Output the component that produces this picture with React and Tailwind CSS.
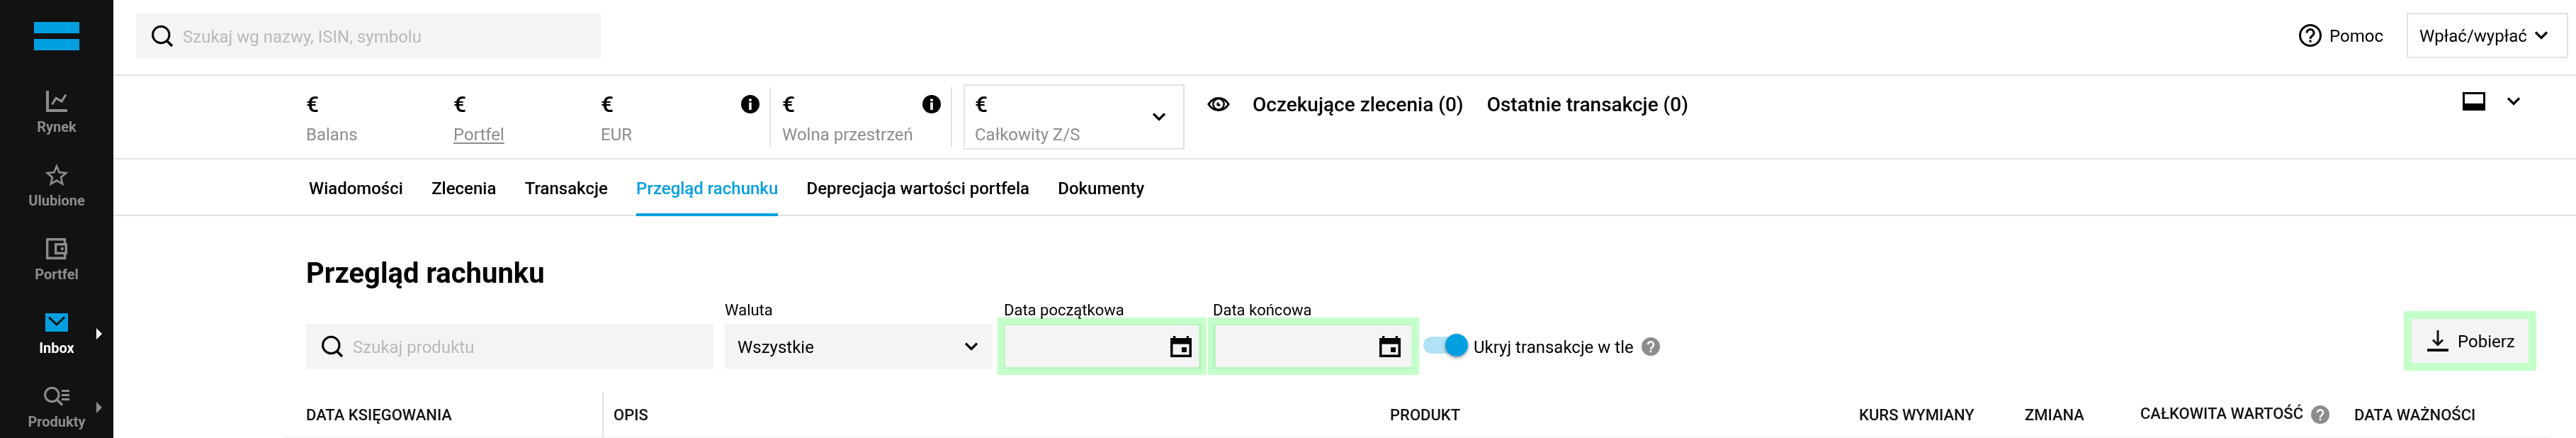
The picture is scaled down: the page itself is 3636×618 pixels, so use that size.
import { useState } from 'react';
import clsx from 'clsx';

const navItems = [
  { id: 'rynek', label: 'Rynek', icon: ChartIcon },
  { id: 'ulubione', label: 'Ulubione', icon: StarIcon },
  { id: 'portfel', label: 'Portfel', icon: WalletIcon },
  { id: 'inbox', label: 'Inbox', icon: MailIcon, expandable: true },
  { id: 'produkty', label: 'Produkty', icon: ProductsIcon, expandable: true },
];

const tabs = [
  'Wiadomości',
  'Zlecenia',
  'Transakcje',
  'Przegląd rachunku',
  'Deprecjacja wartości portfela',
  'Dokumenty',
];

function ChartIcon() {
  return (
    <svg width="36" height="36" viewBox="0 0 36 36" fill="none" stroke="currentColor">
      <path d="M5 3v28h28" strokeWidth="4" />
      <path d="M11.500 22.500l5.500-9 8 4.500 6-9.500" strokeWidth="3.200" />
    </svg>
  );
}

function StarIcon() {
  return (
    <svg width="36" height="36" viewBox="1.090 0.800 21.820 21.820" fill="currentColor">
      <path d="M22 9.240l-7.190-.62L12 2 9.190 8.630 2 9.240l5.460 4.730L5.820 21 12 17.270 18.180 21l-1.630-7.030L22 9.240zM12 15.400l-3.760 2.270 1-4.280-3.320-2.880 4.380-.38L12 6.100l1.710 4.040 4.380.38-3.320 2.880 1 4.280L12 15.400z" />
    </svg>
  );
}

function WalletIcon() {
  return (
    <svg width="36" height="36" viewBox="0 0 36 36" fill="none" stroke="currentColor" strokeWidth="3.400">
      <path d="M29.500 11V4.700H4.700v26.600h24.800V25" />
      <path d="M16.700 11.700h14.600v12.600H16.700z" />
      <circle cx="25.800" cy="18" r="2.200" fill="currentColor" stroke="none" />
    </svg>
  );
}

function MailIcon() {
  return (
    <svg width="36" height="36" viewBox="0 0 36 36" fill="none">
      <path d="M2 5h32v26H2z" fill="#009fdf" />
      <path d="M7 10.500l11 10.500 11-10.500" stroke="#121212" strokeWidth="3" />
    </svg>
  );
}

function ProductsIcon() {
  return (
    <svg width="36" height="36" viewBox="0 0 36 36" fill="none" stroke="currentColor">
      <circle cx="11.300" cy="16" r="9.700" strokeWidth="3" />
      <path d="M18 22.500l8 8" strokeWidth="3.500" />
      <path d="M25 10.500h11M25 16.500h11M25 22.500h11" strokeWidth="3" />
    </svg>
  );
}

function SearchIcon() {
  return (
    <svg width="32" height="32" viewBox="0 0 32 32" fill="none" stroke="#000" className="shrink-0">
      <circle cx="14.300" cy="14" r="11.700" strokeWidth="3" />
      <path d="M22 22l8 8" strokeWidth="3.600" />
    </svg>
  );
}

function Chevron({ className }) {
  return (
    <svg width="20" height="12" viewBox="0 0 20 12" fill="none" stroke="#000" strokeWidth="3.200" className={clsx('shrink-0', className)}>
      <path d="M2 1.500l8 8 8-8" />
    </svg>
  );
}

function InfoIcon({ className }) {
  return (
    <svg width="26" height="26" viewBox="0 0 26 26" className={clsx('shrink-0', className)}>
      <circle cx="13" cy="13" r="13" fill="#000" />
      <path d="M11.200 5.500h3.600v3.300h-3.600zM11.200 10.500h3.600v10.500h-3.600z" fill="#fff" />
    </svg>
  );
}

function EyeIcon() {
  return (
    <svg width="32" height="20" viewBox="0 0 32 20" fill="none" stroke="#000" className="shrink-0">
      <path d="M1.800 10C5.500 4.200 10.200 1.500 16 1.500S26.500 4.200 30.200 10C26.500 15.800 21.800 18.500 16 18.500S5.500 15.800 1.800 10z" strokeWidth="2.800" />
      <circle cx="16" cy="10" r="7.700" strokeWidth="2.400" />
      <path d="M16.500 7.300a2.800 2.800 0 1 0 2.300 3.200 2.300 2.300 0 0 1-2.300-3.200z" fill="#000" stroke="none" />
    </svg>
  );
}

function HelpIcon() {
  return (
    <svg width="26" height="26" viewBox="0 0 26 26" fill="none" className="shrink-0">
      <circle cx="13" cy="13" r="13" fill="#8c8c8c" />
      <path d="M9 10.300a4 4 0 1 1 6.300 3.200c-1.500 1.100-2.300 1.700-2.300 3.400" stroke="#fff" strokeWidth="2.600" />
      <path d="M11.600 18.500h2.700v2.700h-2.700z" fill="#fff" />
    </svg>
  );
}

function CalendarIcon() {
  return (
    <svg width="30" height="30" viewBox="0 0 30 30" fill="#000" className="shrink-0">
      <path fillRule="evenodd" d="M4 0h3.300v3h15.400V0H26v3h4v27H0V3h4zM3.500 11.500v15h23v-15z" />
      <path d="M16 16h7v7h-7z" />
    </svg>
  );
}

// Green frame drawn over a control
function Highlight({ className }) {
  return <span className={clsx('pointer-events-none absolute border-[11px] border-[#c4ffca] mix-blend-multiply', className)} />;
}

function Sidebar({ active, onSelect }) {
  return (
    <aside className="w-[160px] shrink-0 overflow-hidden bg-[#121212]">
      <div className="flex h-[106px] flex-col items-center gap-2 pt-[31px]">
        <div className="h-4 w-16 bg-[#009fdf]" />
        <div className="h-4 w-16 bg-[#009fdf]" />
      </div>
      <nav>
        {navItems.map(({ id, label, icon: Icon, expandable }) => (
          <button
            key={id}
            onClick={() => onSelect(id)}
            className={clsx(
              'relative flex h-[104px] w-full flex-col items-center pt-[19px]',
              active === id ? 'text-white' : 'text-[#8c8c8c]'
            )}
          >
            <Icon />
            <span className="mt-1.5 text-[20px] leading-6 font-bold">{label}</span>
            {expandable && (
              <svg width="8" height="16" viewBox="0 0 8 16" fill="currentColor" className="absolute top-[45px] right-4">
                <path d="M0 0l8 8-8 8z" />
              </svg>
            )}
          </button>
        ))}
      </nav>
    </aside>
  );
}

function TopBar() {
  return (
    <header className="flex h-[107px] items-start border-b-2 border-[#e2e2e2] pl-8 pr-[11px]">
      <div className="mt-[19px] flex h-16 w-[656px] items-center bg-[#f4f4f4] pl-[21px]">
        <SearchIcon />
        <span className="ml-[13px] pt-0.5 text-[24px] leading-8 text-[#b9b9b9]">Szukaj wg nazwy, ISIN, symbolu</span>
      </div>
      <div className="mt-[18px] ml-auto flex items-center">
        <svg width="32" height="32" viewBox="0 0 32 32" fill="none" stroke="#000" strokeWidth="3">
          <circle cx="16" cy="16" r="14.500" />
          <path d="M11 12.500a5 5 0 1 1 7.800 4.100c-1.900 1.300-2.800 2.200-2.800 4.200" />
          <path d="M16 22.500v3.200" />
        </svg>
        <span className="ml-[11px] pt-0.5 text-[24px] leading-8">Pomoc</span>
        <button className="ml-[33px] flex h-16 w-[228px] items-center border-2 border-[#e2e2e2] pl-4">
          <span className="pt-0.5 text-[24px] leading-8">Wpłać/wypłać</span>
          <Chevron className="ml-[10px]" />
        </button>
      </div>
    </header>
  );
}

function Stat({ label, underlined, className, children }) {
  return (
    <div className={clsx('flex h-[84px] items-start justify-between', className)}>
      <div>
        <div className="text-[32px] leading-[48px] font-medium">€</div>
        <div className="text-[24px] leading-[38px] whitespace-nowrap text-[#8c8c8c]">
          <span className={clsx(underlined && 'underline decoration-2 underline-offset-[3px]')}>{label}</span>
        </div>
      </div>
      {children}
    </div>
  );
}

function AccountBar() {
  return (
    <section className="flex h-[118px] items-start border-b-2 border-[#e2e2e2] pt-4 pl-[272px]">
      <Stat label="Balans" className="w-[208px]" />
      <Stat label="Portfel" underlined className="w-[208px]" />
      <Stat label="EUR" className="w-[240px] border-r-2 border-[#e2e2e2] pr-[14px]">
        <InfoIcon className="mt-[11px]" />
      </Stat>
      <Stat label="Wolna przestrzeń" className="w-[256px] border-r-2 border-[#e2e2e2] pr-[14px] pl-4">
        <InfoIcon className="mt-[11px]" />
      </Stat>
      <div className="-mt-1 ml-4 h-[92px] w-[312px] border-2 border-[#e2e2e2] pt-0.5 pr-[24px] pl-[14px]">
        <Stat label="Całkowity Z/S">
          <Chevron className="mt-9" />
        </Stat>
      </div>
      <div className="ml-8 flex h-12 items-center text-[28px] font-medium">
        <EyeIcon />
        <span className="ml-8 pt-px">Oczekujące zlecenia (0)</span>
        <span className="ml-[33px] pt-px">Ostatnie transakcje (0)</span>
      </div>
      <div className="mt-[7px] mr-[78px] ml-auto flex items-start">
        <svg width="32" height="26" viewBox="0 0 32 26">
          <path d="M0 0h32v26H0zM3 3v13h26V3z" fillRule="evenodd" />
        </svg>
        <Chevron className="mt-[7px] ml-[30px]" />
      </div>
    </section>
  );
}

function Tabs({ active, onSelect }) {
  return (
    <nav className="flex h-20 gap-[40.3px] border-b-2 border-[#e2e2e2] pl-[276px] text-[24px] leading-8 font-medium">
      {tabs.map((tab) => (
        <button
          key={tab}
          onClick={() => onSelect(tab)}
          className={clsx(
            'h-20 border-b-4 pt-1.5',
            active === tab ? 'border-[#009fdf] text-[#009fdf]' : 'border-transparent'
          )}
        >
          {tab}
        </button>
      ))}
    </nav>
  );
}

function DateField({ label, className, children }) {
  return (
    <div className={className}>
      <div className="text-[22px] leading-[39px]">{label}</div>
      <div className="relative flex h-16 items-center justify-end bg-[#f4f4f4] pr-[15px]">
        <CalendarIcon />
        {children}
      </div>
    </div>
  );
}

function Filters() {
  const [hidden, setHidden] = useState(true);

  return (
    <div className="flex h-28 items-end pr-[57px] pl-[272px]">
      <div className="flex h-16 w-[575px] items-center bg-[#f4f4f4] pl-[21px]">
        <SearchIcon />
        <span className="ml-[13px] pt-0.5 text-[24px] leading-8 text-[#b9b9b9]">Szukaj produktu</span>
      </div>
      <div className="ml-4 w-[378px]">
        <div className="text-[22px] leading-[39px]">Waluta</div>
        <button className="flex h-16 w-full items-center justify-between bg-[#f4f4f4] pr-5 pl-[18px]">
          <span className="pt-0.5 text-[24px] leading-8">Wszystkie</span>
          <Chevron />
        </button>
      </div>
      <DateField label="Data początkowa" className="ml-4 w-[280px]">
        <Highlight className="-top-[9px] -right-1.5 -bottom-2 -left-[9px]" />
      </DateField>
      <DateField label="Data końcowa" className="ml-[15px] w-[280px]">
        <Highlight className="-top-[9px] -right-[11px] -bottom-2 -left-[7px]" />
      </DateField>
      <label className="ml-[17px] flex h-16 items-center">
        <button onClick={() => setHidden(!hidden)} className="relative h-6 w-[56px] -translate-y-[2px] rounded-full bg-[#b2e2f5]">
          <span
            className={clsx(
              'absolute -top-1 size-8 rounded-full bg-[#009fdf] shadow-[0_2px_5px_rgba(0,0,0,0.4)]',
              hidden ? 'left-[31px]' : 'left-0'
            )}
          />
        </button>
        <span className="ml-[15px] pt-0.5 text-[24px] leading-8">Ukryj transakcje w tle</span>
        <span className="ml-[11px]"><HelpIcon /></span>
      </label>
      <button className="relative mr-[10px] mb-[9px] ml-auto flex h-[62px] w-[165px] items-center bg-[#f4f4f4] pl-[22px]">
        <svg width="30" height="30" viewBox="0 0 30 30" fill="none" stroke="#121212" strokeWidth="3">
          <path d="M15 0v20M8 13.500l7 7 7-7" />
          <path d="M0 28h30" strokeWidth="4" />
        </svg>
        <span className="ml-[13px] pt-0.5 text-[24px] leading-8">Pobierz</span>
        <Highlight className="-inset-x-[11px] -inset-y-[11px]" />
      </button>
    </div>
  );
}

function TableHeader() {
  return (
    <div className="mt-8 mr-9 ml-[240px] flex h-[65px] items-center border-b border-[#efefef] pl-8 text-[22px] font-medium whitespace-nowrap text-[#121212]">
      <div className="w-[418px]">DATA KSIĘGOWANIA</div>
      <div className="flex h-16 w-[1112px] items-center border-l-2 border-[#e2e2e2] pl-[14px]">OPIS</div>
      <div className="w-[662px]">PRODUKT</div>
      <div className="w-[234px]">KURS WYMIANY</div>
      <div className="w-[163px]">ZMIANA</div>
      <div className="flex w-[302px] items-center">
        <span className="-mt-1 mr-[11px]">CAŁKOWITA WARTOŚĆ</span>
        <HelpIcon />
      </div>
      <div>DATA WAŻNOŚCI</div>
    </div>
  );
}

export default function App() {
  const [section, setSection] = useState('inbox');
  const [tab, setTab] = useState('Przegląd rachunku');

  return (
    <div className="flex h-[618px] w-full overflow-hidden bg-white font-['Roboto',sans-serif] text-black">
      <Sidebar active={section} onSelect={setSection} />
      <div className="min-w-0 flex-1">
        <TopBar />
        <AccountBar />
        <Tabs active={tab} onSelect={setTab} />
        <main>
          <h1 className="pt-[57px] pl-[272px] text-[40px] leading-[47px] font-bold">{tab}</h1>
          <Filters />
          <TableHeader />
        </main>
      </div>
    </div>
  );
}
